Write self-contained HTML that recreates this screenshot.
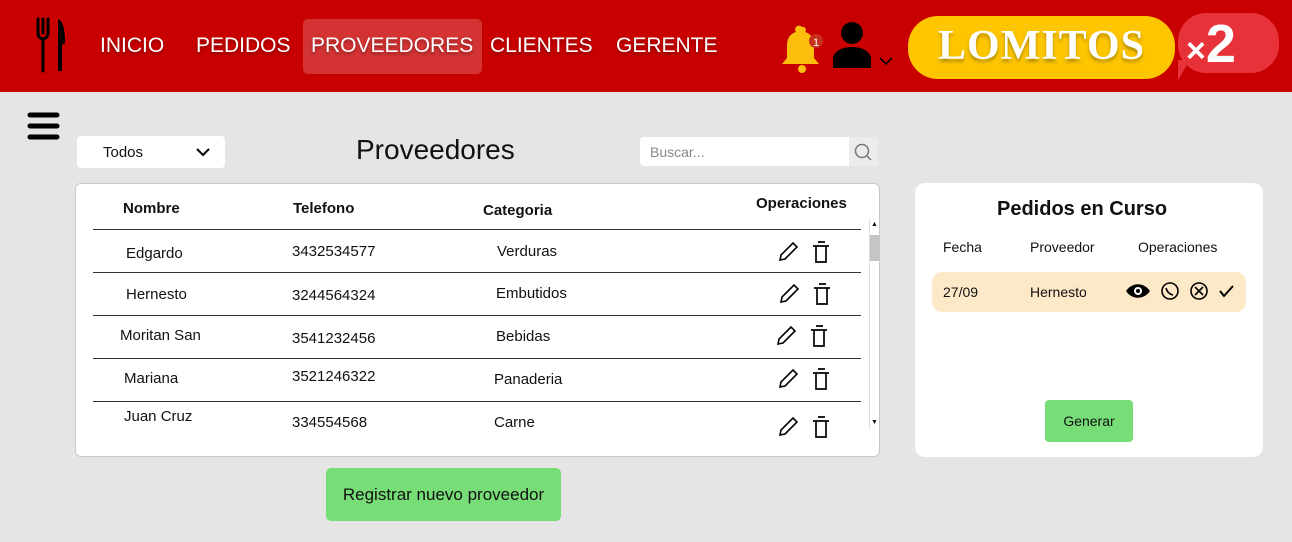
<!DOCTYPE html>
<html><head><meta charset="utf-8"><style>
*{margin:0;padding:0;box-sizing:border-box}
body{width:1292px;height:542px;background:#e5e5e5;font-family:"Liberation Sans",sans-serif;position:relative;overflow:hidden;color:#111}
.a{position:absolute}
.hdr{left:0;top:0;width:1292px;height:92px;background:#c80000}
.nav{top:34px;color:#fff;font-size:21px;text-shadow:0 2px 3px rgba(0,0,0,.35)}
.t{font-size:15px;position:absolute}
.line{position:absolute;left:93px;width:768px;height:1px;background:#333}
</style></head><body>
<div class="a hdr"></div>
<svg class="a" style="left:34px;top:17px" width="34" height="56" viewBox="0 0 34 56">
<path d="M4 2v14c0 4 3 6 5 6v32M9 2v14M14 2v14c0 4-3 6-5 6" stroke="#000" stroke-width="3" fill="none" stroke-linecap="round"/>
<path d="M24 54V2c6 2 7 14 7 24l-3 2 0 26z" fill="#000"/></svg>
<div class="a nav" style="left:100px">INICIO</div>
<div class="a nav" style="left:196px">PEDIDOS</div>
<div class="a" style="left:303px;top:19px;width:179px;height:55px;background:rgba(255,255,255,.2);border-radius:5px"></div>
<div class="a nav" style="left:311px">PROVEEDORES</div>
<div class="a nav" style="left:490px">CLIENTES</div>
<div class="a nav" style="left:616px">GERENTE</div>
<svg class="a" style="left:780px;top:25px" width="46" height="48" viewBox="0 0 46 48">
<path d="M22 2a3 3 0 0 1 3 5c7 2 9 8 9 14v12l5 6H2l5-6V21c0-6 2-12 9-14a3 3 0 0 1 6-5z" fill="#fbbf0c"/>
<circle cx="22" cy="44" r="4" fill="#fbbf0c"/>
<circle cx="36" cy="16" r="7" fill="#c8321c"/><text x="36" y="21" font-size="11" fill="#fff" text-anchor="middle" font-family="Liberation Sans">1</text></svg>
<svg class="a" style="left:832px;top:21px" width="66" height="48" viewBox="0 0 66 48">
<circle cx="20" cy="12" r="11" fill="#000"/><path d="M1 47v-9c0-7 8-12 19-12s19 5 19 12v9z" fill="#000"/>
<path d="M48 37l6 6 6-6" stroke="#000" stroke-width="1.6" fill="none"/></svg>
<div class="a" style="left:908px;top:16px;width:267px;height:63px;background:#fec600;border-radius:30px;color:#fff;font-family:'Liberation Serif',serif;font-weight:bold;font-size:42px;text-align:center;line-height:60px;letter-spacing:1px;text-shadow:0 3px 3px rgba(0,0,0,.3)">LOMITOS</div>
<div class="a" style="left:1178px;top:13px;width:101px;height:60px;background:#e8323a;border-radius:28px"></div>
<div class="a" style="left:1178px;top:60px;width:0;height:0;border-left:12px solid #e8323a;border-bottom:20px solid transparent"></div>
<div class="a" style="left:1186px;top:14px;color:#fff;font-weight:bold;font-size:54px;line-height:60px"><span style="font-size:34px">×</span>2</div>

<svg class="a" style="left:27px;top:112px" width="34" height="30"><path d="M3 3h27M3 14h27M3 25h27" stroke="#000" stroke-width="5" stroke-linecap="round"/></svg>
<div class="a" style="left:77px;top:136px;width:148px;height:32px;background:#fff;border-radius:4px"></div>
<div class="a t" style="left:103px;top:144px">Todos</div>
<svg class="a" style="left:195px;top:146px" width="16" height="12"><path d="M2 3l6 6 6-6" stroke="#000" stroke-width="2" fill="none"/></svg>
<div class="a" style="left:356px;top:134px;font-size:28px">Proveedores</div>
<div class="a" style="left:640px;top:137px;width:238px;height:29px;background:#fff;border-radius:4px"></div>
<div class="a" style="left:849px;top:137px;width:29px;height:29px;background:#ececec;border-radius:0 4px 4px 0"></div>
<div class="a" style="left:650px;top:144px;font-size:14px;color:#888">Buscar...</div>
<svg class="a" style="left:853px;top:142px" width="20" height="20"><circle cx="9" cy="9" r="6.5" stroke="#777" stroke-width="1.5" fill="none"/><path d="M14 14l4 4" stroke="#777" stroke-width="1.5"/></svg>

<div class="a" style="left:75px;top:183px;width:805px;height:274px;background:#fff;border:1px solid #c8c8c8;border-radius:6px"></div>
<div class="a t" style="left:123px;top:200px;font-weight:bold">Nombre</div>
<div class="a t" style="left:293px;top:200px;font-weight:bold">Telefono</div>
<div class="a t" style="left:483px;top:202px;font-weight:bold">Categoria</div>
<div class="a t" style="left:756px;top:195px;font-weight:bold">Operaciones</div>
<div class="line" style="top:229px"></div><div class="line" style="top:272px"></div><div class="line" style="top:315px"></div><div class="line" style="top:358px"></div><div class="line" style="top:401px"></div>
<div class="a" style="left:869px;top:219px;width:10px;height:210px;background:#fff;border-left:1px solid #ddd"></div>
<div class="a" style="left:870px;top:235px;width:9px;height:26px;background:#c4c4c4"></div>
<div class="a" style="left:871px;top:221px;font-size:7px">▲</div><div class="a" style="left:871px;top:419px;font-size:7px">▼</div>

<div class="a t" style="left:126px;top:245px">Edgardo</div><div class="a t" style="left:292px;top:243px">3432534577</div><div class="a t" style="left:497px;top:243px">Verduras</div>
<div class="a t" style="left:126px;top:286px">Hernesto</div><div class="a t" style="left:292px;top:287px">3244564324</div><div class="a t" style="left:496px;top:285px">Embutidos</div>
<div class="a t" style="left:120px;top:327px">Moritan San</div><div class="a t" style="left:292px;top:330px">3541232456</div><div class="a t" style="left:496px;top:328px">Bebidas</div>
<div class="a t" style="left:124px;top:370px">Mariana</div><div class="a t" style="left:292px;top:368px">3521246322</div><div class="a t" style="left:494px;top:371px">Panaderia</div>
<div class="a t" style="left:124px;top:408px">Juan Cruz</div><div class="a t" style="left:292px;top:414px">334554568</div><div class="a t" style="left:494px;top:414px">Carne</div>

<svg class="a" style="left:0;top:0" width="1292" height="542">
<defs><g id="ic"><path d="M2 20l1-5L15 3l4 4L7 19z" stroke="#000" stroke-width="1.6" fill="none"/><path d="M40 2h7M35 6h16M38 6v16h10V6" stroke="#000" stroke-width="1.7" fill="none"/></g></defs>
<use href="#ic" x="778" y="240"/><use href="#ic" x="779" y="282"/><use href="#ic" x="776" y="324"/><use href="#ic" x="778" y="367"/><use href="#ic" x="778" y="415"/>
</svg>

<div class="a" style="left:326px;top:468px;width:235px;height:53px;background:#77dd77;border-radius:5px;font-size:17px;text-align:center;line-height:53px">Registrar nuevo proveedor</div>

<div class="a" style="left:915px;top:183px;width:348px;height:274px;background:#fff;border-radius:10px"></div>
<div class="a" style="left:997px;top:198px;font-size:20px;font-weight:bold">Pedidos en Curso</div>
<div class="a t" style="left:943px;top:239px;font-size:14px">Fecha</div>
<div class="a t" style="left:1030px;top:239px;font-size:14px">Proveedor</div>
<div class="a t" style="left:1138px;top:239px;font-size:14px">Operaciones</div>
<div class="a" style="left:932px;top:272px;width:314px;height:40px;background:#fde8c8;border-radius:10px"></div>
<div class="a t" style="left:943px;top:284px;font-size:14px">27/09</div>
<div class="a t" style="left:1030px;top:284px;font-size:14px">Hernesto</div>
<svg class="a" style="left:1124px;top:280px" width="120" height="24">
<path d="M2 11c6-9 18-9 24 0c-6 9-18 9-24 0z" fill="#000"/><circle cx="14" cy="11" r="4" fill="#fff"/><circle cx="14" cy="11" r="2" fill="#000"/>
<circle cx="46" cy="11" r="8" stroke="#000" stroke-width="1.6" fill="none"/><path d="M42 8c1 4 3 6 7 7" stroke="#000" stroke-width="1.6" fill="none"/>
<circle cx="75" cy="11" r="8" stroke="#000" stroke-width="1.6" fill="none"/><path d="M71 7l8 8M79 7l-8 8" stroke="#000" stroke-width="1.6"/>
<path d="M96 11l4 5 9-10" stroke="#000" stroke-width="2" fill="none"/></svg>
<div class="a" style="left:1045px;top:400px;width:88px;height:42px;background:#77dd77;border-radius:4px;font-size:14px;text-align:center;line-height:42px">Generar</div>
</body></html>
